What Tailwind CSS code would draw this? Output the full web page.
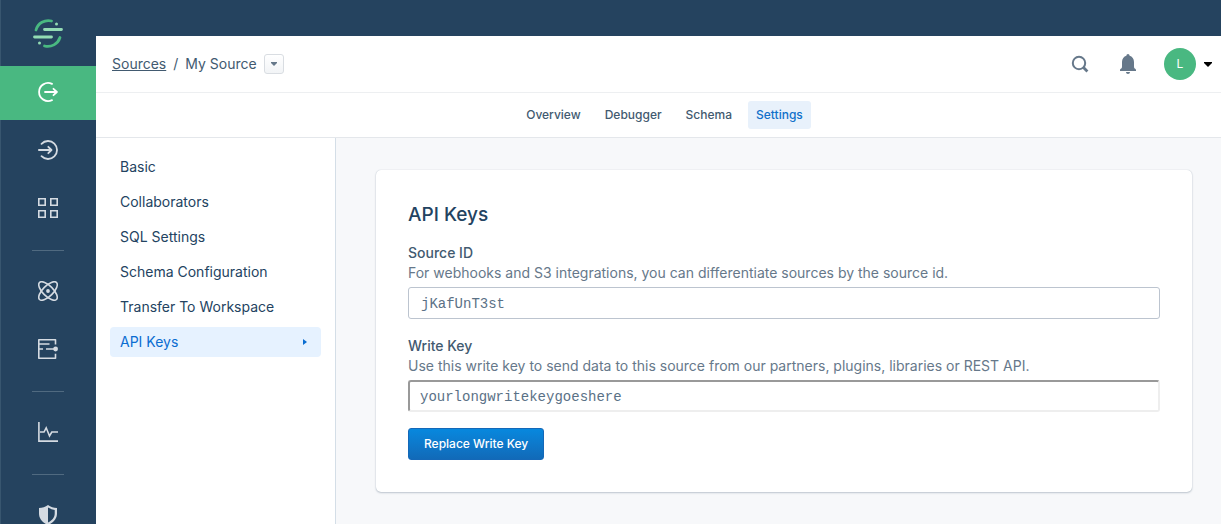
<!DOCTYPE html>
<html lang="en">
<head>
<meta charset="utf-8">
<meta name="viewport" content="width=device-width, initial-scale=1">
<title>API Keys</title>
<script src="https://cdn.jsdelivr.net/npm/@tailwindcss/browser@4"></script>
</head>
<body class="flex h-screen overflow-hidden bg-[#25435f] font-['Inter',sans-serif] text-sm text-[#425a70]">
  <nav aria-label="Main" class="flex w-24 shrink-0 flex-col gap-1 overflow-hidden text-[#d5dbe2] shadow-[inset_1px_0_#38566f]">
    <a href="#" aria-label="Home" class="-mb-1 flex h-[66px] shrink-0 items-center justify-center">
      <svg class="size-8" viewBox="0 0 32 32" fill="none" stroke-width="2.800" stroke-linecap="round">
        <path d="M4 13A12.800 12.800 0 0 1 19.500 4M28 20.500A12.800 12.800 0 0 1 12.500 29" stroke="#49b881"/>
        <path d="M12.500 12.500h17M2.500 20h17" stroke="#93dbb4"/>
        <circle cx="24.500" cy="7" r="1.500" fill="#93dbb4"/><circle cx="7.500" cy="26" r="1.500" fill="#93dbb4"/>
      </svg>
    </a>
    <a href="#" aria-label="Sources" aria-current="page" class="flex h-[54px] shrink-0 items-center justify-center bg-[#49b881] pb-0.5 text-white">
      <svg class="size-5" viewBox="0 0 20 20" fill="none" stroke="currentColor" stroke-width="1.800" stroke-linecap="round" stroke-linejoin="round"><path d="M14 1.900A9 9 0 1 0 14 18.100M7 10h11.500M15.500 6.800L18.900 10l-3.400 3.200"/></svg>
    </a>
    <a href="#" aria-label="Destinations" class="flex h-[54px] shrink-0 items-center justify-center pb-0.5">
      <svg class="size-5" viewBox="0 0 20 20" fill="none" stroke="currentColor" stroke-width="1.800" stroke-linecap="round" stroke-linejoin="round"><path d="M3.500 3.800A9 9 0 1 1 3.500 16.200M.9 10H13M10.300 6.800L13.500 10l-3.200 3.200"/></svg>
    </a>
    <a href="#" aria-label="Catalog" class="flex h-[54px] shrink-0 items-center justify-center pb-0.5">
      <svg class="size-5" viewBox="0 0 20 20" fill="none" stroke="currentColor" stroke-width="1.600"><path d="M.8.8h6.400v6.400H.8zM12.800.8h6.400v6.400h-6.400zM.8 12.800h6.400v6.400H.8zM12.800 12.800h6.400v6.400h-6.400z"/></svg>
    </a>
    <hr class="mx-8 my-2.5 border-[#506a80]">
    <a href="#" aria-label="Personas" class="flex h-[54px] shrink-0 items-center justify-center pb-0.5">
      <svg class="size-5" viewBox="0 0 20 20" fill="none" stroke="currentColor" stroke-width="1.600"><ellipse cx="10" cy="10" rx="12" ry="5.200" transform="rotate(45 10 10)"/><ellipse cx="10" cy="10" rx="12" ry="5.200" transform="rotate(-45 10 10)"/><circle cx="10" cy="10" r="1.900" fill="currentColor" stroke="none"/></svg>
    </a>
    <a href="#" aria-label="Protocols" class="flex h-[54px] shrink-0 items-center justify-center pb-0.5">
      <svg class="size-5" viewBox="0 0 20 20" fill="none" stroke="currentColor" stroke-width="1.600"><path d="M17.500 5.500V.8H.8v18.400h16.700v-4.500" stroke-linejoin="round"/><path d="M1 5h10.500M1 10h4M8 10h9"/><circle cx="17.600" cy="10" r="2.400" fill="currentColor" stroke="none"/></svg>
    </a>
    <hr class="mx-8 my-2.5 border-[#506a80]">
    <a href="#" aria-label="Analytics" class="flex h-[54px] shrink-0 items-center justify-center pb-0.5">
      <svg class="size-5" viewBox="0 0 20 20" fill="none" stroke="currentColor" stroke-width="1.600"><path d="M.9 0v19.100H20"/><path d="M2 10h4l2.200-4.200L11.500 14l2.300-4H20"/></svg>
    </a>
    <hr class="mx-8 my-2.5 border-[#506a80]">
    <a href="#" aria-label="Privacy" class="flex h-[54px] shrink-0 items-center justify-center pb-0.5">
      <svg class="size-5" viewBox="0 0 20 20"><path fill="currentColor" fill-rule="evenodd" d="M10 0c2.600 1.800 5.600 2.900 9 3.100v5.400c0 5-3.400 9.200-9 11.500C4.400 17.700 1 13.500 1 8.500V3.100C4.400 2.900 7.400 1.800 10 0zm0 2.600v14.900c4.200-2 6.700-5.200 6.700-9V4.900C14.200 4.600 12 3.800 10 2.600z"/></svg>
    </a>
  </nav>

  <div class="mt-9 flex min-w-0 flex-1 flex-col bg-white">
    <header class="flex h-[57px] shrink-0 items-center justify-between border-b border-[#edeff1] pr-[9px] pl-4">
      <div class="flex items-center gap-[7px]">
        <a href="#" class="underline">Sources</a>
        <span>/</span>
        <span>My Source</span>
        <button aria-label="Switch source" class="flex size-5 items-center justify-center rounded-[3px] border border-[#d9dde2] bg-linear-to-b from-white to-[#f2f4f6]">
          <svg class="h-1 w-2" viewBox="0 0 8 4"><path d="M1 0h6v1L4 4 1 1z" fill="#66788a"/></svg>
        </button>
      </div>
      <div class="flex items-center">
        <button aria-label="Search" class="mr-7 text-[#66788a]">
          <svg class="size-5" viewBox="0 0 20 20" fill="none" stroke="currentColor"><circle cx="9" cy="9" r="6.200" stroke-width="2"/><path d="M13.500 13.500l3.900 3.900" stroke-width="2.800" /></svg>
        </button>
        <button aria-label="Notifications" class="mr-[26px] text-[#66788a]">
          <svg class="size-5" viewBox="0 0 20 20" fill="currentColor"><path d="M2 16.200c0-.8.500-1.200 1.300-1.600.5-.3.700-1 .7-2V8c0-3.200 1.800-5.500 4.400-6.200C8.500.7 9.100 0 10 0s1.500.7 1.600 1.800C14.200 2.500 16 4.800 16 8v4.600c0 1 .2 1.700.7 2 .8.400 1.300.8 1.300 1.600v.8H2zM8 18h4c0 1.100-.9 2-2 2s-2-.9-2-2z"/></svg>
        </button>
        <button aria-label="Account" class="flex items-center gap-2">
          <span class="flex size-8 items-center justify-center rounded-full bg-[#49b881] text-xs text-white">L</span>
          <svg class="h-[5px] w-2" viewBox="0 0 8 5"><path d="M0 0h8v1L4 5 0 1z" fill="#000"/></svg>
        </button>
      </div>
    </header>

    <nav aria-label="Source" class="flex h-[45px] shrink-0 items-center justify-center gap-2 border-b border-[#e4e7eb] pl-3 text-xs font-medium">
      <a href="#" class="rounded-[3px] px-2 py-1.5">Overview</a>
      <a href="#" class="rounded-[3px] px-2 py-1.5">Debugger</a>
      <a href="#" class="rounded-[3px] px-2 py-1.5">Schema</a>
      <a href="#" aria-current="page" class="rounded-[3px] bg-[#e8f1fb] px-2 py-1.5 text-[#1070ca]">Settings</a>
    </nav>

    <div class="flex min-h-0 flex-1">
      <nav aria-label="Settings" class="flex w-60 shrink-0 flex-col gap-[5px] border-r border-[#d4dee7] p-3.5 text-[#234361]">
        <a href="#" class="flex h-[30px] items-center px-2.5">Basic</a>
        <a href="#" class="flex h-[30px] items-center px-2.5">Collaborators</a>
        <a href="#" class="flex h-[30px] items-center px-2.5">SQL Settings</a>
        <a href="#" class="flex h-[30px] items-center px-2.5">Schema Configuration</a>
        <a href="#" class="flex h-[30px] items-center px-2.5">Transfer To Workspace</a>
        <a href="#" aria-current="page" class="flex h-[30px] items-center justify-between rounded bg-[#e6f2ff] pr-3.5 pl-2.5 text-[#0a6dd1]">API Keys
          <svg class="h-1.5 w-1" viewBox="0 0 4 6"><path d="M0 0l4 3-4 3z" fill="#0a6dd1"/></svg>
        </a>
      </nav>

      <main class="min-w-0 flex-1 bg-[#f7f8fa] pt-8 pr-[29px] pl-10">
        <form class="rounded-[5px] bg-white p-8 shadow-[0_0_1px_rgba(67,90,111,0.3),0_1px_2px_rgba(67,90,111,0.3)]">
          <h1 class="mb-3.5 text-[19px]/[26px] font-medium text-[#234361]">API Keys</h1>
          <label for="source-id" class="block leading-[21px] font-medium">Source ID</label>
          <p id="source-help" class="mb-1 leading-5 text-[#66788a]">For webhooks and S3 integrations, you can differentiate sources by the source id.</p>
          <input id="source-id" aria-describedby="source-help" readonly value="jKafUnT3st" class="block h-8 w-full rounded-[3px] border border-[#bcc4cf] px-3 pt-0.5 font-['Liberation_Mono',monospace] text-[#5a7186]">
          <label for="write-key" class="mt-4 block leading-[21px] font-medium">Write Key</label>
          <p id="write-help" class="mb-1 leading-5 text-[#66788a]">Use this write key to send data to this source from our partners, plugins, libraries or REST API.</p>
          <input id="write-key" aria-describedby="write-help" readonly value="yourlongwritekeygoeshere" class="block h-8 w-full rounded-[3px] border-2 border-t-[#999] border-r-[#eee] border-b-[#eee] border-l-[#999] px-2.5 pt-0.5 font-['Liberation_Mono',monospace] text-[#5a7186]">
          <button type="button" class="mt-4 block h-8 rounded-[3px] border border-[#1468b8] bg-linear-to-b from-[#0788de] to-[#116ab8] px-[15px] text-xs font-medium text-white">Replace Write Key</button>
        </form>
      </main>
    </div>
  </div>
</body>
</html>
